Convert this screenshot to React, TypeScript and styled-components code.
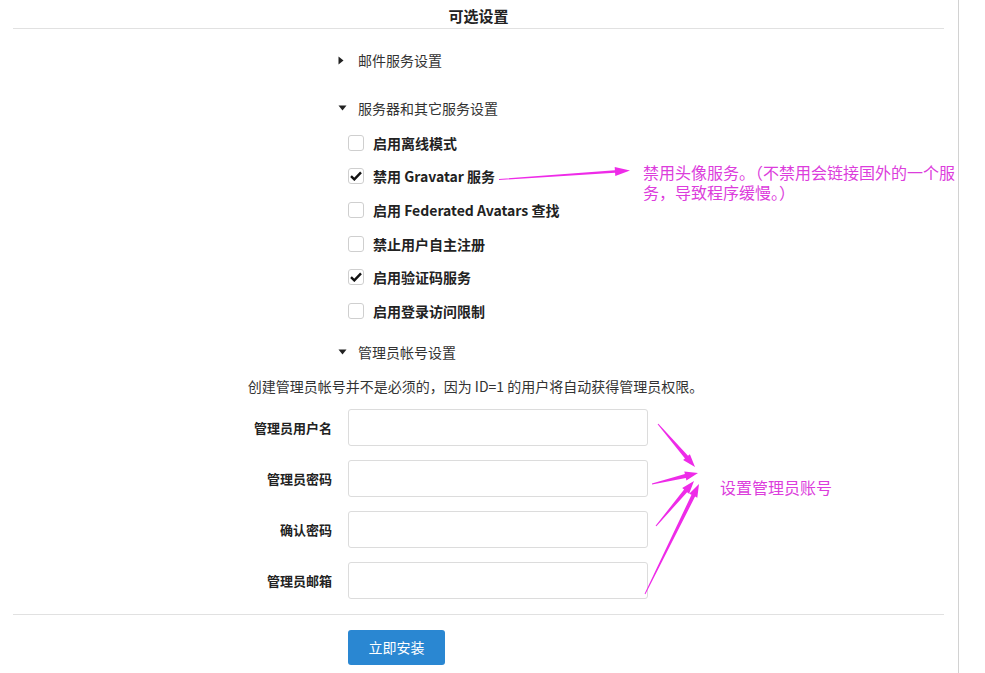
import React from "react";
import styled, { createGlobalStyle } from "styled-components";

const GlobalStyle = createGlobalStyle`
  html, body { margin: 0; padding: 0; background: #fff; }
  body {
    font-family: "Noto Sans CJK SC", "Noto Sans", sans-serif;
    font-size: 14px;
    color: #333;
  }
  * { box-sizing: border-box; }
`;

const Page = styled.div`
  position: relative;
  width: 959px;
  min-height: 673px;
  border-right: 1px solid #d2d2d2;
`;

const Panel = styled.div`
  padding: 0 14px 0 13px;
`;

const Header = styled.div`
  height: 29px;
  padding-top: 3px;
  border-bottom: 1px solid #e1e1e1;
  display: flex;
  align-items: center;
  justify-content: center;
  font-size: 15px;
  font-weight: bold;
  color: #222;
`;

const Body = styled.div`
  display: flex;
  flex-direction: column;
  padding-top: 21px;
`;

const Summary = styled.div<{ $gap: number }>`
  display: flex;
  align-items: center;
  height: 20px;
  margin-top: ${(p) => p.$gap}px;
  margin-left: 325px;
  color: #333;
  font-size: 14px;
`;

const Caret = styled.span`
  width: 20px;
  display: flex;
  align-items: center;
  justify-content: flex-start;
`;

const CheckList = styled.div`
  display: flex;
  flex-direction: column;
  margin-top: 8px;
  margin-left: 335px;
`;

const CheckRow = styled.label`
  display: flex;
  align-items: center;
  height: 33.6px;
  font-weight: bold;
  color: #222;
  font-size: 14px;
  gap: 9px;
`;

const Box = styled.span`
  width: 16px;
  height: 16px;
  border: 1px solid #cfcfcf;
  border-radius: 3px;
  background: #fff;
  display: flex;
  align-items: center;
  justify-content: center;
`;

const Description = styled.div`
  margin-top: 14px;
  width: 925px;
  text-align: center;
  line-height: 20px;
  color: #333;
  font-size: 14px;
`;

const FieldRow = styled.div<{ $gap: number }>`
  display: grid;
  grid-template-columns: 319px 300px;
  column-gap: 16px;
  align-items: center;
  margin-top: ${(p) => p.$gap}px;
`;

const FieldLabel = styled.span`
  text-align: right;
  font-weight: bold;
  color: #222;
  font-size: 13px;
`;

const Input = styled.input`
  height: 37px;
  width: 300px;
  border: 1px solid #dcdcdc;
  border-radius: 3px;
  background: #fff;
  outline: none;
  padding: 0 10px;
  font: inherit;
`;

const Divider = styled.div`
  margin-top: 15px;
  border-top: 1px solid #e1e1e1;
`;

const ButtonRow = styled.div`
  margin-top: 15px;
  padding-left: 335px;
`;

const Button = styled.button`
  width: 97px;
  height: 35px;
  border: none;
  border-radius: 3px;
  background: #2a87d2;
  color: #fff;
  font-family: inherit;
  font-size: 14px;
  cursor: pointer;
`;

const Overlay = styled.svg`
  position: absolute;
  left: 0;
  top: 0;
  pointer-events: none;
`;

const Note = styled.div<{ $x: number; $y: number }>`
  position: absolute;
  left: ${(p) => p.$x}px;
  top: ${(p) => p.$y}px;
  white-space: nowrap;
  font-family: "Noto Sans CJK SC", sans-serif;
  font-size: 16px;
  line-height: 20px;
  color: #dc3ddc;
  pointer-events: none;
`;

function Triangle({ open }: { open: boolean }) {
  return open ? (
    <svg width="9" height="6" viewBox="0 0 9 6">
      <path d="M0.5 0.5 L8.5 0.5 L4.5 5.5 Z" fill="#222" />
    </svg>
  ) : (
    <svg width="6" height="9" viewBox="0 0 6 9">
      <path d="M0.5 0.5 L5.5 4.5 L0.5 8.5 Z" fill="#222" />
    </svg>
  );
}

function Check() {
  return (
    <svg width="12" height="10" viewBox="0 0 12 10">
      <path d="M1 5.2 L4.3 8.4 L11 1.4" fill="none" stroke="#111" strokeWidth="2.4" />
    </svg>
  );
}

function arrowPoints(
  x1: number,
  y1: number,
  x2: number,
  y2: number,
  tailW: number,
  neckW: number,
  headLen: number,
  headW: number
) {
  const dx = x2 - x1;
  const dy = y2 - y1;
  const len = Math.hypot(dx, dy);
  const ux = dx / len;
  const uy = dy / len;
  const nx = -uy;
  const ny = ux;
  const bx = x2 - ux * headLen;
  const by = y2 - uy * headLen;
  const pts = [
    [x1 + nx * tailW / 2, y1 + ny * tailW / 2],
    [bx + nx * neckW / 2, by + ny * neckW / 2],
    [bx + nx * headW, by + ny * headW],
    [x2, y2],
    [bx - nx * headW, by - ny * headW],
    [bx - nx * neckW / 2, by - ny * neckW / 2],
    [x1 - nx * tailW / 2, y1 - ny * tailW / 2],
  ];
  return pts.map((p) => `${p[0].toFixed(1)},${p[1].toFixed(1)}`).join(" ");
}

const checks = [
  { label: "启用离线模式", on: false },
  { label: "禁用 Gravatar 服务", on: true },
  { label: "启用 Federated Avatars 查找", on: false },
  { label: "禁止用户自主注册", on: false },
  { label: "启用验证码服务", on: true },
  { label: "启用登录访问限制", on: false },
];

const fields = [
  { label: "管理员用户名", type: "text" },
  { label: "管理员密码", type: "password" },
  { label: "确认密码", type: "password" },
  { label: "管理员邮箱", type: "email" },
];

const groupArrows: [number, number, number, number][] = [
  [658, 424, 695, 467],
  [652, 484, 698, 473],
  [656, 526, 694, 481],
  [645, 594, 699, 484],
];

export default function App() {
  return (
    <>
      <GlobalStyle />
      <Page>
        <Panel>
          <Header>可选设置</Header>
          <Body>
            <Summary $gap={0}>
              <Caret>
                <Triangle open={false} />
              </Caret>
              邮件服务设置
            </Summary>
            <Summary $gap={28}>
              <Caret>
                <Triangle open />
              </Caret>
              服务器和其它服务设置
            </Summary>
            <CheckList>
              {checks.map((c) => (
                <CheckRow key={c.label}>
                  <Box>{c.on && <Check />}</Box>
                  {c.label}
                </CheckRow>
              ))}
            </CheckList>
            <Summary $gap={14}>
              <Caret>
                <Triangle open />
              </Caret>
              管理员帐号设置
            </Summary>
            <Description>
              创建管理员帐号并不是必须的，因为 ID=1 的用户将自动获得管理员权限。
            </Description>
            {fields.map((f, i) => (
              <FieldRow key={f.label} $gap={i === 0 ? 13 : 14}>
                <FieldLabel>{f.label}</FieldLabel>
                <Input type={f.type} />
              </FieldRow>
            ))}
            <Divider />
            <ButtonRow>
              <Button>立即安装</Button>
            </ButtonRow>
          </Body>
        </Panel>
        <Overlay width="985" height="673" viewBox="0 0 985 673">
          <polygon points={arrowPoints(499, 179.5, 630, 170.5, 1, 2.6, 15, 4.5)} fill="#ee2be8" />
          {groupArrows.map((a, i) => (
            <polygon
              key={i}
              points={arrowPoints(a[0], a[1], a[2], a[3], 1, 4, 13, 4.5)}
              fill="#ee2be8"
            />
          ))}
        </Overlay>
        <Note $x={643} $y={162}>
          禁用头像服务。（不禁用会链接国外的一个服
          <br />
          务，导致程序缓慢。）
        </Note>
        <Note $x={720} $y={477}>
          设置管理员账号
        </Note>
      </Page>
    </>
  );
}
